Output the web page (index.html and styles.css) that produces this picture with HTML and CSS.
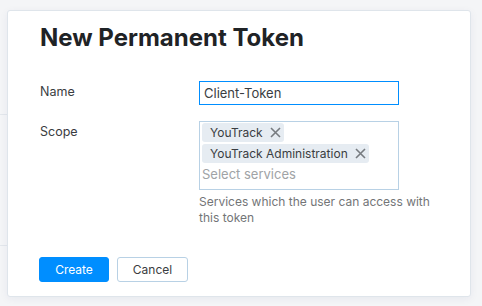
FILE: index.html
```html
<!DOCTYPE html>
<html lang="en">
<head>
  <meta charset="UTF-8">
  <title>New Permanent Token</title>
  <link rel="stylesheet" href="styles.css">
</head>
<body>

  <div class="dialog">
    <h1 class="title">New Permanent Token</h1>

    <div class="form">
      <label class="label">Name</label>
      <div class="field">
        <input class="input" type="text" value="Client-Token">
      </div>

      <label class="label">Scope</label>
      <div class="field">
        <div class="select">
          <span class="tag">YouTrack
            <svg class="tag-x" width="11" height="11" viewBox="0 0 11 11"><path d="M1 1L10 10M10 1L1 10" stroke="#777b80" stroke-width="1.6" fill="none"/></svg>
          </span>
          <span class="tag">YouTrack Administration
            <svg class="tag-x" width="11" height="11" viewBox="0 0 11 11"><path d="M1 1L10 10M10 1L1 10" stroke="#777b80" stroke-width="1.6" fill="none"/></svg>
          </span>
          <span class="placeholder">Select services</span>
        </div>
        <div class="hint">Services which the user can access with this token</div>
      </div>
    </div>

    <div class="actions">
      <button class="btn primary">Create</button>
      <button class="btn">Cancel</button>
    </div>
  </div>

</body>
</html>
```

FILE: styles.css
```css
* { margin: 0; padding: 0; box-sizing: border-box; }
html, body {
  width: 100%;
  height: 100%;
}
body {
  font-family: Inter, "Noto Sans", sans-serif;
  color: #25282c;
  background:
    linear-gradient(#e3e7ec, #e3e7ec) 0 114px / 7px 1px no-repeat,
    linear-gradient(#e3e7ec, #e3e7ec) 0 245px / 7px 1px no-repeat,
    #f4f5f7;
  padding: 10px 11px 0 7px;
}
.dialog {
  width: 464px;
  height: 287px;
  background: #fff;
  border: 1px solid #dfe5eb;
  border-radius: 3px;
  box-shadow: 0 2px 8px rgba(0,40,100,0.06);
  padding: 13px 32px 0 31px;
}
.title {
  font-size: 24px;
  font-weight: 700;
  line-height: 28px;
  color: #1f2326;
  margin-bottom: 29px;
  padding-left: 1px;
}
.form {
  display: grid;
  grid-template-columns: 160px 240px;
  row-gap: 16px;
  font-size: 13px;
  line-height: 16px;
}
.label {
  color: #3a3d41;
  padding-top: 3px;
  padding-left: 1px;
  font-size: 12.5px;
}
.input {
  display: block;
  width: 200px;
  height: 24px;
  border: 1px solid #008eff;
  outline: none;
  padding: 0 4px;
  font: inherit;
  font-size: 13px;
  color: #3a3d41;
}
.select {
  width: 200px;
  border: 1px solid #b8d1e5;
  height: 69px;
  padding: 1px 2px;
  display: flex;
  flex-direction: column;
  align-items: flex-start;
  gap: 2px;
}
.tag {
  display: flex;
  align-items: center;
  gap: 7px;
  height: 19px;
  padding: 0 3px 0 8px;
  background: #e6ecf2;
  border-radius: 3px;
  color: #3a3d41;
  font-size: 12px;
}
.tag-x {
  display: block;
}
.placeholder {
  color: #a0a3a6;
  padding-top: 1px;
}
.hint {
  margin-top: 4px;
  width: 236px;
  color: #737577;
  font-size: 12px;
  line-height: 16px;
}
.actions {
  display: flex;
  gap: 8px;
  margin-top: 31px;
}
.btn {
  height: 25px;
  padding: 0 13px;
  font: inherit;
  font-size: 12px;
  border: 1px solid #b8d1e5;
  border-radius: 3px;
  background: #fff;
  color: #3a3d41;
  width: 71px;
}
.btn.primary {
  background: #008eff;
  border-color: #008eff;
  color: #fff;
  width: 70px;
}
```
